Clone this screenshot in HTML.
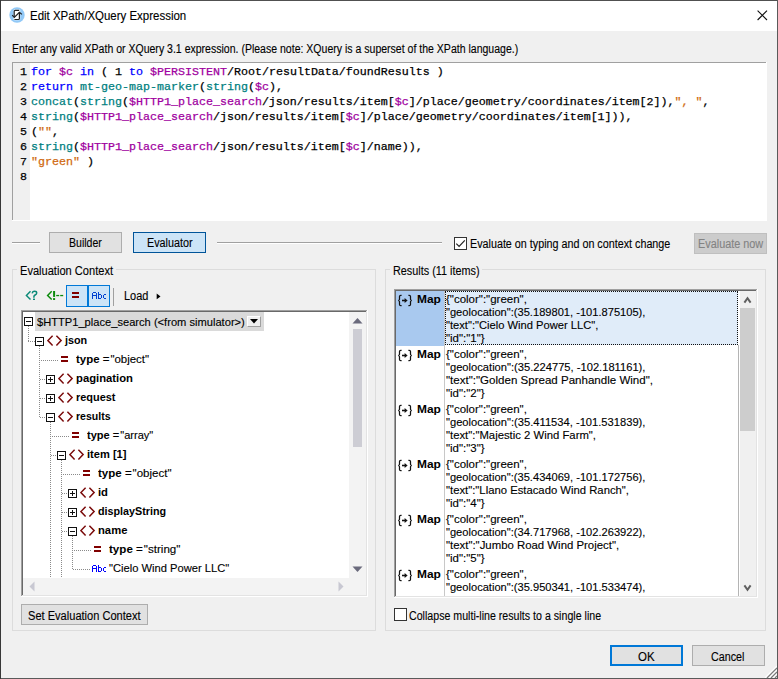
<!DOCTYPE html><html><head><meta charset="utf-8"><style>
*{margin:0;padding:0;box-sizing:border-box}
html,body{width:778px;height:679px;overflow:hidden;background:#f0f0f0}
body{position:relative;font-family:"Liberation Sans",sans-serif;font-size:12px;color:#000}
b{font-weight:bold;-webkit-text-stroke:0}
div{-webkit-text-stroke:0.12px currentColor}
.cd{-webkit-text-stroke:0.25px currentColor}
.kw{color:#0000ff}.vr{color:#a000a0}.fn{color:#008080}.st{color:#d06a10}
</style></head><body>
<div style="position:absolute;left:1px;top:1px;width:776px;height:30px;background:#ffffff"></div>
<div style="position:absolute;left:0px;top:0px;width:778px;height:1px;background:#505050"></div>
<div style="position:absolute;left:0px;top:678px;width:778px;height:1px;background:#5a5a5a"></div>
<div style="position:absolute;left:0px;top:0px;width:1px;height:679px;background:#383838"></div>
<div style="position:absolute;left:777px;top:0px;width:1px;height:679px;background:#5a5a5a"></div>
<svg style="position:absolute;left:9px;top:7px" width="16" height="16" viewBox="0 0 16 16">
<circle cx="8" cy="8" r="7.7" fill="#92c9f7"/>
<rect x="4.6" y="2.6" width="6.6" height="10.6" rx="1" fill="#ffffff"/>
<path d="M5.2 10.3 V4.2 q0-0.9 0.9-0.9 H10.2" fill="none" stroke="#222" stroke-width="1.2"/>
<path d="M10.4 5.4 V11.6 q0 0.9-0.9 0.9 H5.4" fill="none" stroke="#222" stroke-width="1.2"/>
<path d="M3.2 8.2 L5.3 10.5 L10.4 5.3 L12.9 7.4" fill="none" stroke="#222" stroke-width="1.2"/>
</svg>
<div id="t0" style="position:absolute;left:30.4px;top:9px;font-family:'Liberation Sans',sans-serif;font-size:12px;line-height:15px;white-space:pre;transform:scaleX(0.9558);transform-origin:0 0;">Edit XPath/XQuery Expression</div>
<svg style="position:absolute;left:757px;top:10px" width="11" height="11" viewBox="0 0 11 11"><path d="M0.6 0.6 L10 10 M10 0.6 L0.6 10" stroke="#111" stroke-width="1.1"/></svg>
<div id="t1" style="position:absolute;left:12.4px;top:42px;font-family:'Liberation Sans',sans-serif;font-size:12px;line-height:15px;white-space:pre;transform:scaleX(0.8773);transform-origin:0 0;">Enter any valid XPath or XQuery 3.1 expression. (Please note: XQuery is a superset of the XPath language.)</div>
<div style="position:absolute;left:12px;top:62px;width:755px;height:159px;background:#ffffff"></div>
<div style="position:absolute;left:12px;top:62px;width:754px;height:1px;background:#a0a0a0"></div>
<div style="position:absolute;left:12px;top:62px;width:1px;height:158px;background:#a0a0a0"></div>
<div style="position:absolute;left:13px;top:63px;width:17px;height:157px;background:#f0f0f0"></div>
<div class="cd" style="position:absolute;left:20px;top:65px;font-family:'Liberation Mono',monospace;font-size:11.67px;line-height:15px;white-space:pre">1</div>
<div class="cd" style="position:absolute;left:31px;top:65px;font-family:'Liberation Mono',monospace;font-size:11.67px;line-height:15px;white-space:pre"><span class="kw">for</span> <span class="vr">$c</span> <span class="kw">in</span> ( 1 <span class="kw">to</span> <span class="vr">$PERSISTENT</span>/Root/resultData/foundResults )</div>
<div class="cd" style="position:absolute;left:20px;top:80px;font-family:'Liberation Mono',monospace;font-size:11.67px;line-height:15px;white-space:pre">2</div>
<div class="cd" style="position:absolute;left:31px;top:80px;font-family:'Liberation Mono',monospace;font-size:11.67px;line-height:15px;white-space:pre"><span class="kw">return</span> <span class="fn">mt-geo-map-marker</span>(<span class="fn">string</span>(<span class="vr">$c</span>),</div>
<div class="cd" style="position:absolute;left:20px;top:95px;font-family:'Liberation Mono',monospace;font-size:11.67px;line-height:15px;white-space:pre">3</div>
<div class="cd" style="position:absolute;left:31px;top:95px;font-family:'Liberation Mono',monospace;font-size:11.67px;line-height:15px;white-space:pre"><span class="fn">concat</span>(<span class="fn">string</span>(<span class="vr">$HTTP1_place_search</span>/json/results/item[<span class="vr">$c</span>]/place/geometry/coordinates/item[2]),<span class="st">", "</span>,</div>
<div class="cd" style="position:absolute;left:20px;top:110px;font-family:'Liberation Mono',monospace;font-size:11.67px;line-height:15px;white-space:pre">4</div>
<div class="cd" style="position:absolute;left:31px;top:110px;font-family:'Liberation Mono',monospace;font-size:11.67px;line-height:15px;white-space:pre"><span class="fn">string</span>(<span class="vr">$HTTP1_place_search</span>/json/results/item[<span class="vr">$c</span>]/place/geometry/coordinates/item[1])),</div>
<div class="cd" style="position:absolute;left:20px;top:125px;font-family:'Liberation Mono',monospace;font-size:11.67px;line-height:15px;white-space:pre">5</div>
<div class="cd" style="position:absolute;left:31px;top:125px;font-family:'Liberation Mono',monospace;font-size:11.67px;line-height:15px;white-space:pre">(<span class="st">""</span>,</div>
<div class="cd" style="position:absolute;left:20px;top:140px;font-family:'Liberation Mono',monospace;font-size:11.67px;line-height:15px;white-space:pre">6</div>
<div class="cd" style="position:absolute;left:31px;top:140px;font-family:'Liberation Mono',monospace;font-size:11.67px;line-height:15px;white-space:pre"><span class="fn">string</span>(<span class="vr">$HTTP1_place_search</span>/json/results/item[<span class="vr">$c</span>]/name)),</div>
<div class="cd" style="position:absolute;left:20px;top:155px;font-family:'Liberation Mono',monospace;font-size:11.67px;line-height:15px;white-space:pre">7</div>
<div class="cd" style="position:absolute;left:31px;top:155px;font-family:'Liberation Mono',monospace;font-size:11.67px;line-height:15px;white-space:pre"><span class="st">"green"</span> )</div>
<div class="cd" style="position:absolute;left:20px;top:170px;font-family:'Liberation Mono',monospace;font-size:11.67px;line-height:15px;white-space:pre">8</div>
<div class="cd" style="position:absolute;left:31px;top:170px;font-family:'Liberation Mono',monospace;font-size:11.67px;line-height:15px;white-space:pre"></div>
<div style="position:absolute;left:12px;top:242px;width:28px;height:1px;background:#a0a0a0"></div>
<div style="position:absolute;left:12px;top:243px;width:28px;height:1px;background:#ffffff"></div>
<div style="position:absolute;left:217px;top:242px;width:225px;height:1px;background:#a0a0a0"></div>
<div style="position:absolute;left:217px;top:243px;width:225px;height:1px;background:#ffffff"></div>
<div style="position:absolute;left:49px;top:232px;width:73px;height:21px;background:#e1e1e1;border:1px solid #adadad"></div>
<div id="t2" style="position:absolute;left:68.7px;top:236px;font-family:'Liberation Sans',sans-serif;font-size:12px;line-height:15px;white-space:pre;transform:scaleX(0.8780);transform-origin:0 0;">Builder</div>
<div style="position:absolute;left:133px;top:232px;width:73px;height:21px;background:#cce4f7;border:1px solid #005499"></div>
<div id="t3" style="position:absolute;left:147.1px;top:236px;font-family:'Liberation Sans',sans-serif;font-size:12px;line-height:15px;white-space:pre;transform:scaleX(0.8994);transform-origin:0 0;">Evaluator</div>
<div style="position:absolute;left:454px;top:237px;width:13px;height:13px;background:#ffffff;border:1px solid #333333"></div>
<svg style="position:absolute;left:455px;top:238px" width="11" height="11" viewBox="0 0 11 11"><path d="M1.3 5.6 L4.1 8.4 L9.8 2.4" fill="none" stroke="#222" stroke-width="1.2"/></svg>
<div id="t4" style="position:absolute;left:470.1px;top:237px;font-family:'Liberation Sans',sans-serif;font-size:12px;line-height:15px;white-space:pre;transform:scaleX(0.8962);transform-origin:0 0;">Evaluate on typing and on context change</div>
<div style="position:absolute;left:694px;top:233px;width:73px;height:21px;background:#cccccc;border:1px solid #bfbfbf"></div>
<div id="t5" style="position:absolute;left:697.8px;top:237px;font-family:'Liberation Sans',sans-serif;font-size:12px;line-height:15px;white-space:pre;transform:scaleX(0.9050);transform-origin:0 0;color:#838383">Evaluate now</div>
<div style="position:absolute;left:12px;top:269px;width:364px;height:362px;border:1px solid #dcdcdc"></div>
<div style="position:absolute;left:17px;top:264px;width:99px;height:10px;background:#f0f0f0"></div>
<div id="t6" style="position:absolute;left:20.2px;top:264px;font-family:'Liberation Sans',sans-serif;font-size:12px;line-height:15px;white-space:pre;transform:scaleX(0.9232);transform-origin:0 0;">Evaluation Context</div>
<div style="position:absolute;left:385px;top:269px;width:381px;height:362px;border:1px solid #dcdcdc"></div>
<div style="position:absolute;left:390px;top:264px;width:92px;height:10px;background:#f0f0f0"></div>
<div id="t7" style="position:absolute;left:393.0px;top:264px;font-family:'Liberation Sans',sans-serif;font-size:12px;line-height:15px;white-space:pre;transform:scaleX(0.9038);transform-origin:0 0;">Results (11 items)</div>
<svg style="position:absolute;left:22px;top:288px" width="44" height="16" viewBox="0 0 44 16"><path d="M8.5 3.2 L4.4 7.4 L8.5 11.6" fill="none" stroke="#0c8a78" stroke-width="1.45"/><path d="M10.4 5.4 Q10.2 3.2 12.7 3.2 Q14.7 3.2 14.7 4.9 Q14.7 6.2 13.1 7 Q11.9 7.7 11.9 8.8 V9.7" fill="none" stroke="#0c8a78" stroke-width="1.5"/><rect x="11" y="10.6" width="2" height="1.4" fill="#0c8a78"/><path d="M29.7 3.3 L25.6 7.4 L29.7 11.5" fill="none" stroke="#0a8a0a" stroke-width="1.45"/><rect x="31.1" y="3" width="2" height="5.9" fill="#0a8a0a"/><rect x="31.1" y="10.1" width="2" height="1.9" fill="#0a8a0a"/><rect x="34.2" y="6.9" width="3" height="1.3" fill="#0a8a0a"/><rect x="38.2" y="6.9" width="3" height="1.3" fill="#0a8a0a"/></svg>
<div style="position:absolute;left:66px;top:285px;width:44px;height:22px;background:#cce4f7;border:1px solid #0078d7"></div>
<div style="position:absolute;left:87px;top:285px;width:2px;height:22px;background:#0078d7"></div>
<div style="position:absolute;left:72px;top:292px;width:7px;height:2px;background:#800000"></div>
<div style="position:absolute;left:72px;top:296px;width:7px;height:2px;background:#800000"></div>
<svg style="position:absolute;left:92px;top:292px" width="14" height="7" viewBox="0 0 14 7"><rect x="0" y="1" width="1" height="6" fill="#0040d0"/><rect x="4" y="1" width="1" height="6" fill="#0040d0"/><rect x="1" y="0" width="3" height="1" fill="#0040d0"/><rect x="1" y="3" width="3" height="1" fill="#0040d0"/><rect x="6" y="0" width="1" height="7" fill="#0040d0"/><rect x="7" y="2" width="2" height="1" fill="#0040d0"/><rect x="7" y="6" width="2" height="1" fill="#0040d0"/><rect x="9" y="3" width="1" height="3" fill="#0040d0"/><rect x="11" y="3" width="1" height="3" fill="#0040d0"/><rect x="12" y="2" width="2" height="1" fill="#0040d0"/><rect x="12" y="6" width="2" height="1" fill="#0040d0"/></svg>
<div style="position:absolute;left:113px;top:288px;width:1px;height:18px;background:#a0a0a0"></div>
<div id="t8" style="position:absolute;left:124.4px;top:289px;font-family:'Liberation Sans',sans-serif;font-size:12px;line-height:15px;white-space:pre;transform:scaleX(0.9138);transform-origin:0 0;">Load</div>
<svg style="position:absolute;left:156px;top:293px" width="5" height="7" viewBox="0 0 5 7"><path d="M0.7 0.6 L4.5 3.4 L0.7 6.2 Z" fill="#000"/></svg>
<div style="position:absolute;left:21px;top:310px;width:347px;height:287px;background:#f3f3f3"></div>
<div style="position:absolute;left:21px;top:310px;width:346px;height:1px;background:#a0a0a0"></div>
<div style="position:absolute;left:21px;top:310px;width:1px;height:286px;background:#a0a0a0"></div>
<div style="position:absolute;left:22px;top:311px;width:344px;height:1px;background:#696969"></div>
<div style="position:absolute;left:22px;top:311px;width:1px;height:284px;background:#696969"></div>
<div style="position:absolute;left:367px;top:310px;width:1px;height:287px;background:#ffffff"></div>
<div style="position:absolute;left:21px;top:596px;width:347px;height:1px;background:#ffffff"></div>
<div style="position:absolute;left:366px;top:311px;width:1px;height:285px;background:#e3e3e3"></div>
<div style="position:absolute;left:22px;top:595px;width:345px;height:1px;background:#e3e3e3"></div>
<div style="position:absolute;left:23px;top:312px;width:326px;height:266px;background:#ffffff"></div>
<svg style="position:absolute;left:352px;top:317px" width="11" height="7" viewBox="0 0 11 7"><path d="M0.5 6.5 L5.5 1 L10.5 6.5 Z" fill="#6a6a7c"/></svg>
<div style="position:absolute;left:353px;top:329px;width:9px;height:118px;background:#cdcdd4"></div>
<svg style="position:absolute;left:352px;top:566px" width="11" height="7" viewBox="0 0 11 7"><path d="M0.5 0.5 L10.5 0.5 L5.5 6 Z" fill="#6a6a7c"/></svg>
<svg style="position:absolute;left:29px;top:581px" width="6" height="11" viewBox="0 0 6 11"><path d="M5.5 0.5 L0.5 5.5 L5.5 10.5 Z" fill="#c8c8d2"/></svg>
<svg style="position:absolute;left:338px;top:581px" width="6" height="11" viewBox="0 0 6 11"><path d="M0.5 0.5 L5.5 5.5 L0.5 10.5 Z" fill="#c8c8d2"/></svg>
<div style="position:absolute;left:35px;top:312px;width:229px;height:19px;background:#dadada"></div>
<div id="t9" style="position:absolute;left:36.8px;top:315px;font-family:'Liberation Sans',sans-serif;font-size:11px;line-height:15px;white-space:pre;transform:scaleX(1.0116);transform-origin:0 0;">$HTTP1_place_search (&lt;from simulator&gt;)</div>
<div style="position:absolute;left:247px;top:316px;width:14px;height:11px;background:#f0f0f0;border-top:1px solid #fff;border-left:1px solid #fff;border-right:1px solid #a0a0a0;border-bottom:1px solid #a0a0a0"></div>
<svg style="position:absolute;left:250px;top:319px" width="8" height="5" viewBox="0 0 8 5"><path d="M0 0 H8 L4 4.5 Z" fill="#000"/></svg>
<div style="position:absolute;left:24px;top:317px;width:9px;height:9px;background:#fff;border:1px solid #111"></div>
<div style="position:absolute;left:26px;top:321px;width:5px;height:1px;background:#111"></div>
<div style="position:absolute;left:28px;top:326px;width:1px;height:16px;background:repeating-linear-gradient(180deg,#8a8a8a 0 1px,transparent 1px 2px)"></div>
<div style="position:absolute;left:28px;top:341px;width:7px;height:1px;background:repeating-linear-gradient(90deg,#8a8a8a 0 1px,transparent 1px 2px)"></div>
<div style="position:absolute;left:35px;top:337px;width:9px;height:9px;background:#fff;border:1px solid #111"></div>
<div style="position:absolute;left:37px;top:341px;width:5px;height:1px;background:#111"></div>
<svg style="position:absolute;left:47px;top:335px" width="16" height="12" viewBox="0 0 16 12"><path d="M5.6 0.8 L0.9 5.6 L5.6 10.4 M9.4 0.8 L14.1 5.6 L9.4 10.4" fill="none" stroke="#7a0a0a" stroke-width="1.5"/></svg>
<div id="t10" style="position:absolute;left:65.0px;top:333px;font-family:'Liberation Sans',sans-serif;font-size:11px;line-height:15px;white-space:pre;transform:scaleX(0.9812);transform-origin:0 0;"><b>json</b></div>
<div style="position:absolute;left:61px;top:356px;width:7px;height:2px;background:#800000"></div>
<div style="position:absolute;left:61px;top:360px;width:7px;height:2px;background:#800000"></div>
<div id="t11" style="position:absolute;left:76.0px;top:352px;font-family:'Liberation Sans',sans-serif;font-size:11px;line-height:15px;white-space:pre;transform:scaleX(1.0415);transform-origin:0 0;"><b>type</b> =&#8202;"object"</div>
<div style="position:absolute;left:46px;top:375px;width:9px;height:9px;background:#fff;border:1px solid #111"></div>
<div style="position:absolute;left:48px;top:379px;width:5px;height:1px;background:#111"></div>
<div style="position:absolute;left:50px;top:377px;width:1px;height:5px;background:#111"></div>
<svg style="position:absolute;left:58px;top:373px" width="16" height="12" viewBox="0 0 16 12"><path d="M5.6 0.8 L0.9 5.6 L5.6 10.4 M9.4 0.8 L14.1 5.6 L9.4 10.4" fill="none" stroke="#7a0a0a" stroke-width="1.5"/></svg>
<div id="t12" style="position:absolute;left:76.0px;top:371px;font-family:'Liberation Sans',sans-serif;font-size:11px;line-height:15px;white-space:pre;transform:scaleX(1.0232);transform-origin:0 0;"><b>pagination</b></div>
<div style="position:absolute;left:46px;top:394px;width:9px;height:9px;background:#fff;border:1px solid #111"></div>
<div style="position:absolute;left:48px;top:398px;width:5px;height:1px;background:#111"></div>
<div style="position:absolute;left:50px;top:396px;width:1px;height:5px;background:#111"></div>
<svg style="position:absolute;left:58px;top:392px" width="16" height="12" viewBox="0 0 16 12"><path d="M5.6 0.8 L0.9 5.6 L5.6 10.4 M9.4 0.8 L14.1 5.6 L9.4 10.4" fill="none" stroke="#7a0a0a" stroke-width="1.5"/></svg>
<div id="t13" style="position:absolute;left:76.0px;top:390px;font-family:'Liberation Sans',sans-serif;font-size:11px;line-height:15px;white-space:pre;transform:scaleX(0.9937);transform-origin:0 0;"><b>request</b></div>
<div style="position:absolute;left:46px;top:413px;width:9px;height:9px;background:#fff;border:1px solid #111"></div>
<div style="position:absolute;left:48px;top:417px;width:5px;height:1px;background:#111"></div>
<svg style="position:absolute;left:58px;top:411px" width="16" height="12" viewBox="0 0 16 12"><path d="M5.6 0.8 L0.9 5.6 L5.6 10.4 M9.4 0.8 L14.1 5.6 L9.4 10.4" fill="none" stroke="#7a0a0a" stroke-width="1.5"/></svg>
<div id="t14" style="position:absolute;left:76.0px;top:409px;font-family:'Liberation Sans',sans-serif;font-size:11px;line-height:15px;white-space:pre;transform:scaleX(0.9590);transform-origin:0 0;"><b>results</b></div>
<div style="position:absolute;left:72px;top:432px;width:7px;height:2px;background:#800000"></div>
<div style="position:absolute;left:72px;top:436px;width:7px;height:2px;background:#800000"></div>
<div id="t15" style="position:absolute;left:87.0px;top:428px;font-family:'Liberation Sans',sans-serif;font-size:11px;line-height:15px;white-space:pre;transform:scaleX(1.0060);transform-origin:0 0;"><b>type</b> =&#8202;"array"</div>
<div style="position:absolute;left:57px;top:451px;width:9px;height:9px;background:#fff;border:1px solid #111"></div>
<div style="position:absolute;left:59px;top:455px;width:5px;height:1px;background:#111"></div>
<svg style="position:absolute;left:69px;top:449px" width="16" height="12" viewBox="0 0 16 12"><path d="M5.6 0.8 L0.9 5.6 L5.6 10.4 M9.4 0.8 L14.1 5.6 L9.4 10.4" fill="none" stroke="#7a0a0a" stroke-width="1.5"/></svg>
<div id="t16" style="position:absolute;left:87.0px;top:447px;font-family:'Liberation Sans',sans-serif;font-size:11px;line-height:15px;white-space:pre;transform:scaleX(1.0096);transform-origin:0 0;"><b>item [1]</b></div>
<div style="position:absolute;left:83px;top:470px;width:7px;height:2px;background:#800000"></div>
<div style="position:absolute;left:83px;top:474px;width:7px;height:2px;background:#800000"></div>
<div id="t17" style="position:absolute;left:98.0px;top:466px;font-family:'Liberation Sans',sans-serif;font-size:11px;line-height:15px;white-space:pre;transform:scaleX(1.0472);transform-origin:0 0;"><b>type</b> =&#8202;"object"</div>
<div style="position:absolute;left:68px;top:489px;width:9px;height:9px;background:#fff;border:1px solid #111"></div>
<div style="position:absolute;left:70px;top:493px;width:5px;height:1px;background:#111"></div>
<div style="position:absolute;left:72px;top:491px;width:1px;height:5px;background:#111"></div>
<svg style="position:absolute;left:80px;top:487px" width="16" height="12" viewBox="0 0 16 12"><path d="M5.6 0.8 L0.9 5.6 L5.6 10.4 M9.4 0.8 L14.1 5.6 L9.4 10.4" fill="none" stroke="#7a0a0a" stroke-width="1.5"/></svg>
<div id="t18" style="position:absolute;left:98.0px;top:485px;font-family:'Liberation Sans',sans-serif;font-size:11px;line-height:15px;white-space:pre;transform:scaleX(1.0224);transform-origin:0 0;"><b>id</b></div>
<div style="position:absolute;left:68px;top:508px;width:9px;height:9px;background:#fff;border:1px solid #111"></div>
<div style="position:absolute;left:70px;top:512px;width:5px;height:1px;background:#111"></div>
<div style="position:absolute;left:72px;top:510px;width:1px;height:5px;background:#111"></div>
<svg style="position:absolute;left:80px;top:506px" width="16" height="12" viewBox="0 0 16 12"><path d="M5.6 0.8 L0.9 5.6 L5.6 10.4 M9.4 0.8 L14.1 5.6 L9.4 10.4" fill="none" stroke="#7a0a0a" stroke-width="1.5"/></svg>
<div id="t19" style="position:absolute;left:98.0px;top:504px;font-family:'Liberation Sans',sans-serif;font-size:11px;line-height:15px;white-space:pre;transform:scaleX(0.9772);transform-origin:0 0;"><b>displayString</b></div>
<div style="position:absolute;left:68px;top:527px;width:9px;height:9px;background:#fff;border:1px solid #111"></div>
<div style="position:absolute;left:70px;top:531px;width:5px;height:1px;background:#111"></div>
<svg style="position:absolute;left:80px;top:525px" width="16" height="12" viewBox="0 0 16 12"><path d="M5.6 0.8 L0.9 5.6 L5.6 10.4 M9.4 0.8 L14.1 5.6 L9.4 10.4" fill="none" stroke="#7a0a0a" stroke-width="1.5"/></svg>
<div id="t20" style="position:absolute;left:98.0px;top:523px;font-family:'Liberation Sans',sans-serif;font-size:11px;line-height:15px;white-space:pre;transform:scaleX(1.0226);transform-origin:0 0;"><b>name</b></div>
<div style="position:absolute;left:94px;top:546px;width:7px;height:2px;background:#800000"></div>
<div style="position:absolute;left:94px;top:550px;width:7px;height:2px;background:#800000"></div>
<div id="t21" style="position:absolute;left:109.0px;top:542px;font-family:'Liberation Sans',sans-serif;font-size:11px;line-height:15px;white-space:pre;transform:scaleX(1.0541);transform-origin:0 0;"><b>type</b> =&#8202;"string"</div>
<svg style="position:absolute;left:92px;top:565px" width="14" height="7" viewBox="0 0 14 7"><rect x="0" y="1" width="1" height="6" fill="#0000ff"/><rect x="4" y="1" width="1" height="6" fill="#0000ff"/><rect x="1" y="0" width="3" height="1" fill="#0000ff"/><rect x="1" y="3" width="3" height="1" fill="#0000ff"/><rect x="6" y="0" width="1" height="7" fill="#0000ff"/><rect x="7" y="2" width="2" height="1" fill="#0000ff"/><rect x="7" y="6" width="2" height="1" fill="#0000ff"/><rect x="9" y="3" width="1" height="3" fill="#0000ff"/><rect x="11" y="3" width="1" height="3" fill="#0000ff"/><rect x="12" y="2" width="2" height="1" fill="#0000ff"/><rect x="12" y="6" width="2" height="1" fill="#0000ff"/></svg>
<div id="t22" style="position:absolute;left:109.4px;top:561px;font-family:'Liberation Sans',sans-serif;font-size:11px;line-height:15px;white-space:pre;transform:scaleX(1.0146);transform-origin:0 0;">"Cielo Wind Power LLC"</div>
<div style="position:absolute;left:39px;top:346px;width:1px;height:72px;background:repeating-linear-gradient(180deg,#8a8a8a 0 1px,transparent 1px 2px)"></div>
<div style="position:absolute;left:39px;top:360px;width:20px;height:1px;background:repeating-linear-gradient(90deg,#8a8a8a 0 1px,transparent 1px 2px)"></div>
<div style="position:absolute;left:40px;top:379px;width:6px;height:1px;background:repeating-linear-gradient(90deg,#8a8a8a 0 1px,transparent 1px 2px)"></div>
<div style="position:absolute;left:40px;top:398px;width:6px;height:1px;background:repeating-linear-gradient(90deg,#8a8a8a 0 1px,transparent 1px 2px)"></div>
<div style="position:absolute;left:40px;top:417px;width:6px;height:1px;background:repeating-linear-gradient(90deg,#8a8a8a 0 1px,transparent 1px 2px)"></div>
<div style="position:absolute;left:50px;top:422px;width:1px;height:156px;background:repeating-linear-gradient(180deg,#8a8a8a 0 1px,transparent 1px 2px)"></div>
<div style="position:absolute;left:50px;top:436px;width:20px;height:1px;background:repeating-linear-gradient(90deg,#8a8a8a 0 1px,transparent 1px 2px)"></div>
<div style="position:absolute;left:51px;top:455px;width:6px;height:1px;background:repeating-linear-gradient(90deg,#8a8a8a 0 1px,transparent 1px 2px)"></div>
<div style="position:absolute;left:61px;top:460px;width:1px;height:118px;background:repeating-linear-gradient(180deg,#8a8a8a 0 1px,transparent 1px 2px)"></div>
<div style="position:absolute;left:61px;top:474px;width:20px;height:1px;background:repeating-linear-gradient(90deg,#8a8a8a 0 1px,transparent 1px 2px)"></div>
<div style="position:absolute;left:62px;top:493px;width:6px;height:1px;background:repeating-linear-gradient(90deg,#8a8a8a 0 1px,transparent 1px 2px)"></div>
<div style="position:absolute;left:62px;top:512px;width:6px;height:1px;background:repeating-linear-gradient(90deg,#8a8a8a 0 1px,transparent 1px 2px)"></div>
<div style="position:absolute;left:62px;top:531px;width:6px;height:1px;background:repeating-linear-gradient(90deg,#8a8a8a 0 1px,transparent 1px 2px)"></div>
<div style="position:absolute;left:72px;top:536px;width:1px;height:34px;background:repeating-linear-gradient(180deg,#8a8a8a 0 1px,transparent 1px 2px)"></div>
<div style="position:absolute;left:72px;top:550px;width:20px;height:1px;background:repeating-linear-gradient(90deg,#8a8a8a 0 1px,transparent 1px 2px)"></div>
<div style="position:absolute;left:73px;top:569px;width:18px;height:1px;background:repeating-linear-gradient(90deg,#8a8a8a 0 1px,transparent 1px 2px)"></div>
<div style="position:absolute;left:21px;top:604px;width:127px;height:21px;background:#e1e1e1;border:1px solid #adadad"></div>
<div id="t23" style="position:absolute;left:27.8px;top:609px;font-family:'Liberation Sans',sans-serif;font-size:12px;line-height:15px;white-space:pre;transform:scaleX(0.9224);transform-origin:0 0;">Set Evaluation Context</div>
<div style="position:absolute;left:394px;top:289px;width:364px;height:309px;background:#ffffff"></div>
<div style="position:absolute;left:394px;top:289px;width:363px;height:1px;background:#a0a0a0"></div>
<div style="position:absolute;left:394px;top:289px;width:1px;height:308px;background:#a0a0a0"></div>
<div style="position:absolute;left:395px;top:290px;width:361px;height:1px;background:#696969"></div>
<div style="position:absolute;left:395px;top:290px;width:1px;height:306px;background:#696969"></div>
<div style="position:absolute;left:756px;top:290px;width:1px;height:307px;background:#e3e3e3"></div>
<div style="position:absolute;left:395px;top:596px;width:362px;height:1px;background:#e3e3e3"></div>
<div style="position:absolute;left:757px;top:289px;width:1px;height:309px;background:#ffffff"></div>
<div style="position:absolute;left:394px;top:597px;width:364px;height:1px;background:#ffffff"></div>
<div style="position:absolute;left:444px;top:291px;width:1px;height:305px;background:#c8c8c8"></div>
<div style="position:absolute;left:738px;top:345px;width:1px;height:251px;background:#b4b4b4"></div>
<div style="position:absolute;left:740px;top:291px;width:16px;height:305px;background:#f0f0f0"></div>
<div style="position:absolute;left:740px;top:308px;width:15px;height:123px;background:#cdcdcd"></div>
<svg style="position:absolute;left:743px;top:296px" width="9" height="8" viewBox="0 0 9 8"><path d="M1.4 6.6 L4.5 2.2 L7.6 6.6" fill="none" stroke="#606060" stroke-width="2"/></svg>
<svg style="position:absolute;left:743px;top:584px" width="9" height="8" viewBox="0 0 9 8"><path d="M1.4 1.4 L4.5 5.8 L7.6 1.4" fill="none" stroke="#606060" stroke-width="2"/></svg>
<div style="position:absolute;left:396px;top:291px;width:48px;height:55px;background:#a9c9ef"></div>
<div style="position:absolute;left:445px;top:291px;width:293px;height:54px;background:#e0ecf9;border:1px dotted #111"></div>
<svg style="position:absolute;left:397px;top:294px" width="16" height="13" viewBox="0 0 16 13"><path d="M4.6 1.4 H3.7 Q2.5 1.4 2.5 2.6 V5.3 Q2.5 6.3 1.2 6.5 Q2.5 6.7 2.5 7.7 V10.4 Q2.5 11.6 3.7 11.6 H4.6" fill="none" stroke="#111" stroke-width="1.25"/><path d="M11.4 1.4 H12.3 Q13.5 1.4 13.5 2.6 V5.3 Q13.5 6.3 14.8 6.5 Q13.5 6.7 13.5 7.7 V10.4 Q13.5 11.6 12.3 11.6 H11.4" fill="none" stroke="#111" stroke-width="1.25"/><path d="M5 6.5 H8.6" stroke="#111" stroke-width="1.6"/><path d="M7.6 4.1 L10.6 6.5 L7.6 8.9 Z" fill="#111"/></svg>
<div id="t24" style="position:absolute;left:416.8px;top:292px;font-family:'Liberation Sans',sans-serif;font-size:11px;line-height:15px;white-space:pre;transform:scaleX(1.0864);transform-origin:0 0;"><b>Map</b></div>
<div id="t25" style="position:absolute;left:445.9px;top:292px;font-family:'Liberation Sans',sans-serif;font-size:11px;line-height:15px;white-space:pre;transform:scaleX(1.0453);transform-origin:0 0;">{"color":"green",</div>
<div id="t26" style="position:absolute;left:446.4px;top:305px;font-family:'Liberation Sans',sans-serif;font-size:11px;line-height:15px;white-space:pre;transform:scaleX(1.0101);transform-origin:0 0;">"geolocation":(35.189801, -101.875105),</div>
<div id="t27" style="position:absolute;left:446.4px;top:318px;font-family:'Liberation Sans',sans-serif;font-size:11px;line-height:15px;white-space:pre;transform:scaleX(1.0145);transform-origin:0 0;">"text":"Cielo Wind Power LLC",</div>
<div id="t28" style="position:absolute;left:446.4px;top:331px;font-family:'Liberation Sans',sans-serif;font-size:11px;line-height:15px;white-space:pre;transform:scaleX(1.0424);transform-origin:0 0;">"id":"1"}</div>
<svg style="position:absolute;left:397px;top:349px" width="16" height="13" viewBox="0 0 16 13"><path d="M4.6 1.4 H3.7 Q2.5 1.4 2.5 2.6 V5.3 Q2.5 6.3 1.2 6.5 Q2.5 6.7 2.5 7.7 V10.4 Q2.5 11.6 3.7 11.6 H4.6" fill="none" stroke="#111" stroke-width="1.25"/><path d="M11.4 1.4 H12.3 Q13.5 1.4 13.5 2.6 V5.3 Q13.5 6.3 14.8 6.5 Q13.5 6.7 13.5 7.7 V10.4 Q13.5 11.6 12.3 11.6 H11.4" fill="none" stroke="#111" stroke-width="1.25"/><path d="M5 6.5 H8.6" stroke="#111" stroke-width="1.6"/><path d="M7.6 4.1 L10.6 6.5 L7.6 8.9 Z" fill="#111"/></svg>
<div id="t29" style="position:absolute;left:416.8px;top:347px;font-family:'Liberation Sans',sans-serif;font-size:11px;line-height:15px;white-space:pre;transform:scaleX(1.0864);transform-origin:0 0;"><b>Map</b></div>
<div id="t30" style="position:absolute;left:445.9px;top:347px;font-family:'Liberation Sans',sans-serif;font-size:11px;line-height:15px;white-space:pre;transform:scaleX(1.0453);transform-origin:0 0;">{"color":"green",</div>
<div id="t31" style="position:absolute;left:446.4px;top:360px;font-family:'Liberation Sans',sans-serif;font-size:11px;line-height:15px;white-space:pre;transform:scaleX(1.0143);transform-origin:0 0;">"geolocation":(35.224775, -102.181161),</div>
<div id="t32" style="position:absolute;left:446.4px;top:373px;font-family:'Liberation Sans',sans-serif;font-size:11px;line-height:15px;white-space:pre;transform:scaleX(1.0494);transform-origin:0 0;">"text":"Golden Spread Panhandle Wind",</div>
<div id="t33" style="position:absolute;left:446.4px;top:386px;font-family:'Liberation Sans',sans-serif;font-size:11px;line-height:15px;white-space:pre;transform:scaleX(1.0424);transform-origin:0 0;">"id":"2"}</div>
<svg style="position:absolute;left:397px;top:404px" width="16" height="13" viewBox="0 0 16 13"><path d="M4.6 1.4 H3.7 Q2.5 1.4 2.5 2.6 V5.3 Q2.5 6.3 1.2 6.5 Q2.5 6.7 2.5 7.7 V10.4 Q2.5 11.6 3.7 11.6 H4.6" fill="none" stroke="#111" stroke-width="1.25"/><path d="M11.4 1.4 H12.3 Q13.5 1.4 13.5 2.6 V5.3 Q13.5 6.3 14.8 6.5 Q13.5 6.7 13.5 7.7 V10.4 Q13.5 11.6 12.3 11.6 H11.4" fill="none" stroke="#111" stroke-width="1.25"/><path d="M5 6.5 H8.6" stroke="#111" stroke-width="1.6"/><path d="M7.6 4.1 L10.6 6.5 L7.6 8.9 Z" fill="#111"/></svg>
<div id="t34" style="position:absolute;left:416.8px;top:402px;font-family:'Liberation Sans',sans-serif;font-size:11px;line-height:15px;white-space:pre;transform:scaleX(1.0864);transform-origin:0 0;"><b>Map</b></div>
<div id="t35" style="position:absolute;left:445.9px;top:402px;font-family:'Liberation Sans',sans-serif;font-size:11px;line-height:15px;white-space:pre;transform:scaleX(1.0453);transform-origin:0 0;">{"color":"green",</div>
<div id="t36" style="position:absolute;left:446.4px;top:415px;font-family:'Liberation Sans',sans-serif;font-size:11px;line-height:15px;white-space:pre;transform:scaleX(1.0143);transform-origin:0 0;">"geolocation":(35.411534, -101.531839),</div>
<div id="t37" style="position:absolute;left:446.4px;top:428px;font-family:'Liberation Sans',sans-serif;font-size:11px;line-height:15px;white-space:pre;transform:scaleX(1.0286);transform-origin:0 0;">"text":"Majestic 2 Wind Farm",</div>
<div id="t38" style="position:absolute;left:446.4px;top:441px;font-family:'Liberation Sans',sans-serif;font-size:11px;line-height:15px;white-space:pre;transform:scaleX(1.0424);transform-origin:0 0;">"id":"3"}</div>
<svg style="position:absolute;left:397px;top:459px" width="16" height="13" viewBox="0 0 16 13"><path d="M4.6 1.4 H3.7 Q2.5 1.4 2.5 2.6 V5.3 Q2.5 6.3 1.2 6.5 Q2.5 6.7 2.5 7.7 V10.4 Q2.5 11.6 3.7 11.6 H4.6" fill="none" stroke="#111" stroke-width="1.25"/><path d="M11.4 1.4 H12.3 Q13.5 1.4 13.5 2.6 V5.3 Q13.5 6.3 14.8 6.5 Q13.5 6.7 13.5 7.7 V10.4 Q13.5 11.6 12.3 11.6 H11.4" fill="none" stroke="#111" stroke-width="1.25"/><path d="M5 6.5 H8.6" stroke="#111" stroke-width="1.6"/><path d="M7.6 4.1 L10.6 6.5 L7.6 8.9 Z" fill="#111"/></svg>
<div id="t39" style="position:absolute;left:416.8px;top:457px;font-family:'Liberation Sans',sans-serif;font-size:11px;line-height:15px;white-space:pre;transform:scaleX(1.0864);transform-origin:0 0;"><b>Map</b></div>
<div id="t40" style="position:absolute;left:445.9px;top:457px;font-family:'Liberation Sans',sans-serif;font-size:11px;line-height:15px;white-space:pre;transform:scaleX(1.0453);transform-origin:0 0;">{"color":"green",</div>
<div id="t41" style="position:absolute;left:446.4px;top:470px;font-family:'Liberation Sans',sans-serif;font-size:11px;line-height:15px;white-space:pre;transform:scaleX(1.0101);transform-origin:0 0;">"geolocation":(35.434069, -101.172756),</div>
<div id="t42" style="position:absolute;left:446.4px;top:483px;font-family:'Liberation Sans',sans-serif;font-size:11px;line-height:15px;white-space:pre;transform:scaleX(1.0265);transform-origin:0 0;">"text":"Llano Estacado Wind Ranch",</div>
<div id="t43" style="position:absolute;left:446.4px;top:496px;font-family:'Liberation Sans',sans-serif;font-size:11px;line-height:15px;white-space:pre;transform:scaleX(1.0424);transform-origin:0 0;">"id":"4"}</div>
<svg style="position:absolute;left:397px;top:514px" width="16" height="13" viewBox="0 0 16 13"><path d="M4.6 1.4 H3.7 Q2.5 1.4 2.5 2.6 V5.3 Q2.5 6.3 1.2 6.5 Q2.5 6.7 2.5 7.7 V10.4 Q2.5 11.6 3.7 11.6 H4.6" fill="none" stroke="#111" stroke-width="1.25"/><path d="M11.4 1.4 H12.3 Q13.5 1.4 13.5 2.6 V5.3 Q13.5 6.3 14.8 6.5 Q13.5 6.7 13.5 7.7 V10.4 Q13.5 11.6 12.3 11.6 H11.4" fill="none" stroke="#111" stroke-width="1.25"/><path d="M5 6.5 H8.6" stroke="#111" stroke-width="1.6"/><path d="M7.6 4.1 L10.6 6.5 L7.6 8.9 Z" fill="#111"/></svg>
<div id="t44" style="position:absolute;left:416.8px;top:512px;font-family:'Liberation Sans',sans-serif;font-size:11px;line-height:15px;white-space:pre;transform:scaleX(1.0864);transform-origin:0 0;"><b>Map</b></div>
<div id="t45" style="position:absolute;left:445.9px;top:512px;font-family:'Liberation Sans',sans-serif;font-size:11px;line-height:15px;white-space:pre;transform:scaleX(1.0453);transform-origin:0 0;">{"color":"green",</div>
<div id="t46" style="position:absolute;left:446.4px;top:525px;font-family:'Liberation Sans',sans-serif;font-size:11px;line-height:15px;white-space:pre;transform:scaleX(1.0101);transform-origin:0 0;">"geolocation":(34.717968, -102.263922),</div>
<div id="t47" style="position:absolute;left:446.4px;top:538px;font-family:'Liberation Sans',sans-serif;font-size:11px;line-height:15px;white-space:pre;transform:scaleX(1.0350);transform-origin:0 0;">"text":"Jumbo Road Wind Project",</div>
<div id="t48" style="position:absolute;left:446.4px;top:551px;font-family:'Liberation Sans',sans-serif;font-size:11px;line-height:15px;white-space:pre;transform:scaleX(1.0424);transform-origin:0 0;">"id":"5"}</div>
<svg style="position:absolute;left:397px;top:569px" width="16" height="13" viewBox="0 0 16 13"><path d="M4.6 1.4 H3.7 Q2.5 1.4 2.5 2.6 V5.3 Q2.5 6.3 1.2 6.5 Q2.5 6.7 2.5 7.7 V10.4 Q2.5 11.6 3.7 11.6 H4.6" fill="none" stroke="#111" stroke-width="1.25"/><path d="M11.4 1.4 H12.3 Q13.5 1.4 13.5 2.6 V5.3 Q13.5 6.3 14.8 6.5 Q13.5 6.7 13.5 7.7 V10.4 Q13.5 11.6 12.3 11.6 H11.4" fill="none" stroke="#111" stroke-width="1.25"/><path d="M5 6.5 H8.6" stroke="#111" stroke-width="1.6"/><path d="M7.6 4.1 L10.6 6.5 L7.6 8.9 Z" fill="#111"/></svg>
<div id="t49" style="position:absolute;left:416.8px;top:567px;font-family:'Liberation Sans',sans-serif;font-size:11px;line-height:15px;white-space:pre;transform:scaleX(1.0864);transform-origin:0 0;"><b>Map</b></div>
<div id="t50" style="position:absolute;left:445.9px;top:567px;font-family:'Liberation Sans',sans-serif;font-size:11px;line-height:15px;white-space:pre;transform:scaleX(1.0453);transform-origin:0 0;">{"color":"green",</div>
<div id="t51" style="position:absolute;left:446.4px;top:580px;font-family:'Liberation Sans',sans-serif;font-size:11px;line-height:15px;white-space:pre;transform:scaleX(1.0101);transform-origin:0 0;">"geolocation":(35.950341, -101.533474),</div>
<div style="position:absolute;left:394px;top:597px;width:364px;height:1px;background:#ffffff"></div>
<div style="position:absolute;left:394px;top:608px;width:13px;height:13px;background:#ffffff;border:1px solid #333333"></div>
<div id="t52" style="position:absolute;left:409.2px;top:609px;font-family:'Liberation Sans',sans-serif;font-size:12px;line-height:15px;white-space:pre;transform:scaleX(0.8861);transform-origin:0 0;">Collapse multi-line results to a single line</div>
<div style="position:absolute;left:610px;top:645px;width:73px;height:21px;background:#e1e1e1;border:2px solid #0078d7"></div>
<div id="t53" style="position:absolute;left:637.9px;top:650px;font-family:'Liberation Sans',sans-serif;font-size:12px;line-height:15px;white-space:pre;transform:scaleX(0.9571);transform-origin:0 0;">OK</div>
<div style="position:absolute;left:692px;top:645px;width:73px;height:21px;background:#e1e1e1;border:1px solid #adadad"></div>
<div id="t54" style="position:absolute;left:711.2px;top:650px;font-family:'Liberation Sans',sans-serif;font-size:12px;line-height:15px;white-space:pre;transform:scaleX(0.8967);transform-origin:0 0;">Cancel</div>
<svg style="position:absolute;left:764px;top:665px" width="13" height="13" viewBox="0 0 13 13"><path d="M1 13 L13 1 M5 13 L13 5 M9 13 L13 9" stroke="#ffffff" stroke-width="1.2"/><path d="M3 13 L13 3 M7 13 L13 7 M11 13 L13 11" stroke="#7a7a7a" stroke-width="1.15"/></svg>
</body></html>
